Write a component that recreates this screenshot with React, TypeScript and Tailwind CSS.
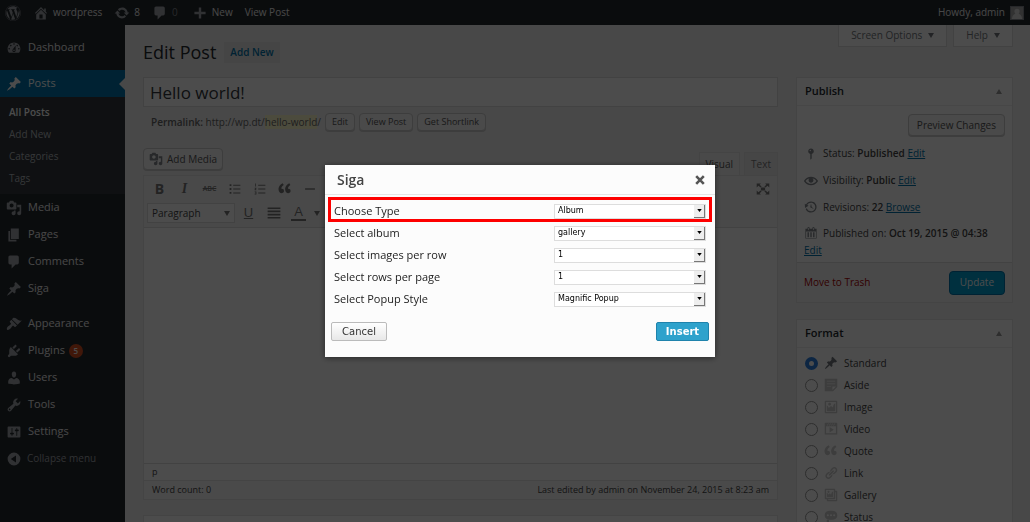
import { useState } from 'react'
import type { ReactNode } from 'react'
import { FaWordpress } from 'react-icons/fa'

const ICONS = {
  pin: 'M10.44 3.02l1.82-1.82 6.36 6.35-1.83 1.82c-1.05-.68-2.48-.57-3.41.36l-.75.75c-.92.93-1.04 2.35-.35 3.41l-1.83 1.82-2.41-2.41-2.8 2.79c-.42.42-3.38 2.71-3.8 2.29s1.86-3.39 2.28-3.81l2.79-2.79L4.1 9.36l1.83-1.82c1.05.69 2.48.57 3.4-.36l.75-.75c.93-.92 1.05-2.35.36-3.41z',
  comments: 'M5 2h9c1.1 0 2 .9 2 2v7c0 1.1-.9 2-2 2h-2l-5 5v-5H5c-1.1 0-2-.9-2-2V4c0-1.1.9-2 2-2z',
  pages: 'M6 15V2h10v13H6zm-1 1h8v2H3V5h2v11z',
  media: 'M13 11V4c0-.55-.45-1-1-1h-1.67L9 1H5L3.67 3H2c-.55 0-1 .45-1 1v7c0 .55.45 1 1 1h10c.55 0 1-.45 1-1zM7 4.5c1.38 0 2.5 1.12 2.5 2.5S8.38 9.5 7 9.5 4.5 8.38 4.5 7 5.62 4.5 7 4.5zM14 6h5v10.5c0 1.38-1.12 2.5-2.5 2.5S14 17.88 14 16.5s1.12-2.5 2.5-2.5c.17 0 .34.02.5.05V9h-3V6zm-4 8.05V13h2v3.5c0 1.38-1.12 2.5-2.5 2.5S7 17.88 7 16.5 8.12 14 9.5 14c.17 0 .34.02.5.05z',
  appearance: 'M14.48 11.06L7.41 3.99l1.5-1.5c.5-.56 2.3-.47 3.51.32 1.21.8 1.43 1.28 2.91 2.1 1.18.64 2.45 1.26 4.45.85zm-.71.71L6.7 4.7 4.93 6.47c-.39.39-.39 1.02 0 1.41l1.06 1.06c.39.39.39 1.03 0 1.42-.6.6-1.43 1.11-2.21 1.69-.35.26-.7.53-1.01.84C1.43 14.23.4 16.08 1.4 17.07c.99 1 2.84-.03 4.18-1.36.31-.31.58-.66.85-1.02.57-.78 1.08-1.61 1.69-2.21.39-.39 1.02-.39 1.41 0l1.06 1.06c.39.39 1.02.39 1.41 0z',
  plugins: 'M13.11 4.36L9.87 7.6 8 5.73l3.24-3.24c.35-.34 1.05-.2 1.56.32.52.51.66 1.21.31 1.55zm-8 1.77l.91-1.12 9.01 9.01-1.19.84c-.71.71-2.63 1.16-3.82 1.16H6.14L4.9 17.26c-.59.59-1.54.59-2.12 0-.59-.58-.59-1.53 0-2.12l1.24-1.24v-3.88c0-1.13.4-3.19 1.09-3.89zm7.26 3.97l3.24-3.24c.34-.35 1.04-.21 1.55.31.52.51.66 1.21.31 1.55l-3.24 3.25z',
  users: 'M10 9.25c-2.27 0-2.73-3.44-2.73-3.44C7 4.02 7.82 2 9.97 2c2.16 0 2.98 2.02 2.71 3.81 0 0-.41 3.44-2.68 3.44zm0 2.57L12.72 10c2.39 0 4.52 2.33 4.52 4.53v2.49s-3.65 1.13-7.24 1.13c-3.65 0-7.24-1.13-7.24-1.13v-2.49c0-2.25 1.94-4.48 4.47-4.48z',
  tools: 'M16.68 9.77c-1.34 1.34-3.3 1.67-4.95.99l-5.41 6.52c-.99.99-2.59.99-3.58 0s-.99-2.59 0-3.57l6.52-5.42c-.68-1.65-.35-3.61.99-4.95 1.28-1.28 3.12-1.62 4.72-1.06l-2.89 2.89 2.82 2.82 2.86-2.87c.53 1.58.18 3.39-1.08 4.65zM3.81 16.21c.4.39 1.04.39 1.43 0 .4-.4.4-1.04 0-1.43-.39-.4-1.03-.4-1.43 0-.39.39-.39 1.03 0 1.43z',
  settings: 'M18 16V4c0-.55-.45-1-1-1H3c-.55 0-1 .45-1 1v12c0 .55.45 1 1 1h14c.55 0 1-.45 1-1zM8 11h1c.55 0 1 .45 1 1s-.45 1-1 1H8v1.5c0 .28-.22.5-.5.5s-.5-.22-.5-.5V13H6c-.55 0-1-.45-1-1s.45-1 1-1h1V5.5c0-.28.22-.5.5-.5s.5.22.5.5V11zm5-2h-1c-.55 0-1-.45-1-1s.45-1 1-1h1V5.5c0-.28.22-.5.5-.5s.5.22.5.5V7h1c.55 0 1 .45 1 1s-.45 1-1 1h-1v5.5c0 .28-.22.5-.5.5s-.5-.22-.5-.5V9z',
  collapse: 'M10 2a8 8 0 1 0 0 16 8 8 0 0 0 0-16zM12.500 5.500v9L6 10z',
  dashboard: 'M3.76 16h12.48c1.1-1.37 1.76-3.11 1.76-5 0-4.42-3.58-8-8-8s-8 3.58-8 8c0 1.89.66 3.63 1.76 5zM10 4c.55 0 1 .45 1 1s-.45 1-1 1-1-.45-1-1 .45-1 1-1zM6 6c.55 0 1 .45 1 1s-.45 1-1 1-1-.45-1-1 .45-1 1-1zm8 0c.55 0 1 .45 1 1s-.45 1-1 1-1-.45-1-1 .45-1 1-1zm-5.37 5.55L12 7v6c0 1.1-.9 2-2 2s-2-.9-2-2c0-.57.24-1.08.63-1.45zM4 10c.55 0 1 .45 1 1s-.45 1-1 1-1-.45-1-1 .45-1 1-1zm12 0c.55 0 1 .45 1 1s-.45 1-1 1-1-.45-1-1 .45-1 1-1zm-5 3c0-.55-.45-1-1-1s-1 .45-1 1 .45 1 1 1 1-.45 1-1z',
  home: 'M16 8.5l1.53 1.53-1.06 1.06L10 4.6l-6.47 6.49-1.06-1.06L10 2.5l4 4v-2h2v4zm-6-2.46l6 5.99V18H4v-5.97zM12 17v-5H8v5h4z',
  update: 'M10.2 3.28c3.53 0 6.43 2.61 6.92 6h2.08l-3.5 4-3.5-4h2.32c-.45-1.97-2.21-3.45-4.32-3.45-1.45 0-2.73.71-3.54 1.78L4.95 5.66C6.23 4.2 8.11 3.28 10.2 3.28zm-.4 13.44c-3.52 0-6.43-2.61-6.92-6H.8l3.5-4c1.17 1.33 2.33 2.67 3.5 4H5.48c.45 1.97 2.21 3.45 4.32 3.45 1.45 0 2.73-.71 3.54-1.78l1.71 1.95c-1.28 1.46-3.15 2.38-5.25 2.38z',
  plus: 'M17 8.500v3h-5.500V17h-3v-5.500H3v-3h5.500V3h3v5.500z',
  status: 'M14 6c0 1.86-1.28 3.41-3 3.86V16c0 1-2 2-2 2V9.86c-1.72-.45-3-2-3-3.86 0-2.21 1.79-4 4-4s4 1.79 4 4zM8 5c0 .55.45 1 1 1s1-.45 1-1-.45-1-1-1-1 .45-1 1z',
  eye: 'M19.700 9.400C17.700 6 14 3.900 10 3.900S2.300 6 .3 9.400L0 10l.3.6c2 3.400 5.700 5.500 9.700 5.500s7.700-2.100 9.700-5.500l.3-.6-.3-.6zM10 14.100c-3.100 0-6-1.600-7.700-4.100C3.600 8 5.700 6.600 8 6.100c-.9.6-1.500 1.700-1.500 2.900 0 1.900 1.600 3.500 3.500 3.500s3.500-1.600 3.500-3.500c0-1.200-.6-2.300-1.500-2.900 2.300.5 4.400 1.900 5.700 3.900-1.700 2.500-4.600 4.100-7.700 4.100z',
  backup: 'M13.65 2.88c3.93 2.01 5.48 6.84 3.47 10.77s-6.83 5.48-10.77 3.47c-1.87-.96-3.2-2.56-3.86-4.4l1.64-1.03c.45 1.57 1.52 2.95 3.08 3.76 3.01 1.54 6.69.35 8.23-2.66 1.55-3.01.36-6.69-2.65-8.24C9.78 3.01 6.1 4.2 4.56 7.21l1.88.97-4.95 3.08-.39-5.82 1.78.91C4.9 2.4 9.75.89 13.65 2.88zm-4.36 7.83C9.11 10.53 9 10.28 9 10c0-.07.03-.12.04-.19h-.01L10 5l.97 4.81L14 13l-4.500-2.120.02-.02c-.08-.04-.16-.09-.23-.15z',
  calendar: 'M15 4h3v14H2V4h3V3c0-.83.67-1.500 1.500-1.500S8 2.170 8 3v1h4V3c0-.83.67-1.500 1.500-1.500S15 2.170 15 3v1zM6 3v2.500c0 .28.22.5.5.5s.5-.22.5-.5V3c0-.28-.22-.5-.5-.5S6 2.720 6 3zm7 0v2.500c0 .28.22.5.5.5s.5-.22.5-.5V3c0-.28-.22-.5-.5-.5s-.5.22-.5.5zm4 14V8H3v9h14zM7 16V9H5v7h2zm4 0V9H9v7h2zm4 0V9h-2v7h2z',
  aside: 'M1 1h18v12l-6 6H1V1zm3 3v1h12V4H4zm0 4v1h12V8H4zm6 5v-1H4v1h6zm2 4l5-5h-5v5z',
  image: 'M2.25 1h15.5c.69 0 1.25.56 1.25 1.25v15.5c0 .69-.56 1.25-1.25 1.25H2.25C1.56 19 1 18.44 1 17.75V2.25C1 1.56 1.56 1 2.25 1zM17 17V3H3v14h14zM10 6c0-1.1-.9-2-2-2s-2 .9-2 2 .9 2 2 2 2-.9 2-2zm3 5s0-6 3-6v10c0 .55-.45 1-1 1H5c-.55 0-1-.45-1-1V8c2 0 3 4 3 4s1-3 3-3 3 2 3 2z',
  video: 'M2 1h16c.55 0 1 .45 1 1v16l-18-.02V2c0-.55.45-1 1-1zm4 1L4 5h1l2-3H6zm4 0H9L7 5h1zm3 0h-1l-2 3h1zm3 0h-1l-2 3h1zm1 14V6H3v10h14zM8 7l6 4-6 4V7z',
  quote: 'M8.54 12.74c0-.87-.24-1.61-.72-2.22-.73-.92-2.14-1.03-2.96-.85-.34-1.93 1.3-4.39 3.42-5.45L6.65 1.94C3.45 3.46.31 6.96.85 11.37 1.19 14.16 2.8 16 5.08 16c1 0 1.83-.29 2.48-.88.66-.59.98-1.38.98-2.38zm9.43 0c0-.87-.24-1.61-.72-2.22-.73-.92-2.14-1.03-2.96-.85-.34-1.93 1.3-4.39 3.42-5.45l-1.63-2.28c-3.2 1.52-6.34 5.02-5.8 9.43.34 2.79 1.95 4.63 4.23 4.63 1 0 1.83-.29 2.48-.88.66-.59.98-1.38.98-2.38z',
  link: 'M17.74 2.76c1.68 1.69 1.68 4.41 0 6.1l-1.53 1.52c-1.12 1.12-2.7 1.47-4.14 1.09l2.62-2.61.76-.77.76-.76c.84-.84.84-2.2 0-3.04-.84-.85-2.2-.85-3.04 0l-.77.76-3.38 3.38c-.37-1.44-.02-3.02 1.1-4.14l1.52-1.53c1.69-1.68 4.42-1.68 6.1 0zM8.59 13.43l5.34-5.34c.42-.42.42-1.1 0-1.52-.44-.43-1.13-.39-1.53 0l-5.33 5.34c-.42.42-.42 1.1 0 1.52.44.43 1.13.39 1.52 0zm-.76 2.29l4.14-4.15c.38 1.44.03 3.02-1.09 4.14l-1.52 1.53c-1.69 1.68-4.41 1.68-6.1 0-1.68-1.68-1.68-4.42 0-6.1l1.53-1.52c1.12-1.12 2.7-1.47 4.14-1.1l-4.14 4.15c-.85.84-.85 2.2 0 3.05.84.84 2.2.84 3.04 0z',
  gallery: 'M16 4h1.96c.57 0 1.04.47 1.04 1.04v12.92c0 .57-.47 1.04-1.04 1.04H5.04C4.47 19 4 18.53 4 17.96V16H2.04C1.47 16 1 15.53 1 14.96V2.04C1 1.47 1.47 1 2.04 1h12.92c.57 0 1.04.47 1.04 1.04V4zM3 14h11V3H3v11zm5-8.5C8 4.67 7.33 4 6.5 4S5 4.67 5 5.5 5.67 7 6.5 7 8 6.33 8 5.5zm2 4.5s1-5 3-5v8H4V7c2 0 2 3 2 3s.33-2 2-2 2 2 2 2zm7 7V6h-1v8.96c0 .57-.47 1.04-1.04 1.04H6v1h11z',
  chat: 'M10 1c7 0 9 2.910 9 6.500S17 14 10 14s-9-2.910-9-6.500S3 1 10 1zM5.500 9a1.500 1.500 0 1 0 0-3 1.500 1.500 0 0 0 0 3zM10 9a1.500 1.500 0 1 0 0-3 1.500 1.500 0 0 0 0 3zM14.500 9a1.500 1.500 0 1 0 0-3 1.500 1.500 0 0 0 0 3zM5.500 14a1.800 1.800 0 1 1 0 3.600 1.800 1.800 0 0 1 0-3.600zM2 17a1 1 0 1 1 0 2 1 1 0 0 1 0-2z',
  ul: 'M1 2h3v3H1zM7 3h12v1.500H7zM1 8.500h3v3H1zM7 9.300h12v1.500H7zM1 15h3v3H1zM7 15.800h12v1.500H7z',
  ol: 'M2 1h1.300v5H2zM7 3h12v1.500H7zM1 8h3v1.200L2.500 11H4v1H1v-1l1.500-2H1zM7 9.300h12v1.500H7zM1 14h3v5H1v-1h2v-1H1.500v-1H3v-1H1zM7 15.800h12v1.500H7z',
  hr: 'M3 9h14v2H3z',
  justify: 'M2 3h16v2H2zM2 7h16v2H2zM2 11h16v2H2zM2 15h16v2H2z',
  fullscreen: 'M1 2h6L5.200 3.800 8 6.500 6.500 8 3.500 5.300 1 8zM19 2v6l-2.500-2.700L13.500 8 12 6.500l2.800-2.700L13 2zM1 18v-6l2.500 2.700L6.500 12 8 13.500l-2.800 2.700L7 18zM19 18h-6l1.800-1.800L12 13.500l1.500-1.500 3 2.700L19 12zM7 8h6v4H7z',
}

type IconName = keyof typeof ICONS

function Icon({ name, className = 'size-4' }: { name: IconName; className?: string }) {
  return (
    <svg viewBox="0 0 20 20" fill="currentColor" fillRule="evenodd" aria-hidden="true" className={`shrink-0 ${className}`}>
      <path d={ICONS[name]} />
    </svg>
  )
}

function Caret({ up = false, className = '' }: { up?: boolean; className?: string }) {
  return (
    <svg viewBox="0 0 6 5" fill="currentColor" aria-hidden="true" className={`h-[5px] w-[6px] shrink-0 ${className}`}>
      <path d={up ? 'M3 0l3 5H0z' : 'M0 0h6L3 5z'} />
    </svg>
  )
}

const menuTop: [IconName, string][] = [
  ['media', 'Media'],
  ['pages', 'Pages'],
  ['comments', 'Comments'],
  ['pin', 'Siga'],
]

const menuBottom: [IconName, string][] = [
  ['appearance', 'Appearance'],
  ['plugins', 'Plugins'],
  ['users', 'Users'],
  ['tools', 'Tools'],
  ['settings', 'Settings'],
]

const formats: [IconName, string][] = [
  ['pin', 'Standard'],
  ['aside', 'Aside'],
  ['image', 'Image'],
  ['video', 'Video'],
  ['quote', 'Quote'],
  ['link', 'Link'],
  ['gallery', 'Gallery'],
  ['chat', 'Status'],
]

const fields = [
  { id: 'type', label: 'Choose Type', options: ['Album', 'Gallery'] },
  { id: 'album', label: 'Select album', options: ['gallery'] },
  { id: 'images', label: 'Select images per row', options: ['1', '2', '3', '4'] },
  { id: 'rows', label: 'Select rows per page', options: ['1', '2', '3', '4'] },
  { id: 'popup', label: 'Select Popup Style', options: ['Magnific Popup'] },
]

function AdminBar() {
  return (
    <header className="flex h-[25px] shrink-0 items-center bg-[#23282d] pr-1.5 pl-[5px] text-[10px] text-[#eee]">
      <a href="#" aria-label="About WordPress" className="text-[#a0a5aa]">
        <FaWordpress className="size-4" />
      </a>
      <a href="#" className="ml-3 flex items-center gap-1">
        <Icon name="home" className="size-4 text-[#a0a5aa]" />
        wordpress
      </a>
      <a href="#" className="ml-3 flex items-center gap-1">
        <Icon name="update" className="size-4 text-[#a0a5aa]" />
        8
      </a>
      <a href="#" className="ml-3 flex items-center gap-1 text-[#82878c]">
        <Icon name="comments" className="size-4 text-[#a0a5aa]" />
        0
      </a>
      <a href="#" className="ml-3.5 flex items-center gap-1">
        <Icon name="plus" className="size-4 text-[#a0a5aa]" />
        New
      </a>
      <a href="#" className="ml-3">View Post</a>
      <a href="#" className="ml-auto flex items-center gap-[5px]">
        Howdy, admin
        <svg viewBox="0 0 14 14" aria-hidden="true" className="size-3.5 border border-[#82878c] bg-[#a8a8a8]">
          <path fill="#dedede" d="M7 2a3 3 0 0 1 3 3c0 1.500-.7 2.500-1.300 3 2 .8 3.800 2 4.300 6H1c.5-4 2.300-5.200 4.300-6C4.700 7.500 4 6.500 4 5a3 3 0 0 1 3-3z" />
        </svg>
      </a>
    </header>
  )
}

function MenuItem({ icon, children }: { icon: IconName; children: ReactNode }) {
  return (
    <a href="#" className="flex h-[27px] items-center gap-1.5 pl-1.5 text-[11px] text-[#eee]">
      <Icon name={icon} className="size-4 text-[#a0a5aa]" />
      {children}
    </a>
  )
}

function Sidebar() {
  return (
    <nav className="w-[125px] shrink-0 bg-[#23282d] pt-[9px]">
      <MenuItem icon="dashboard">Dashboard</MenuItem>
      <a href="#" className="mt-[9px] flex h-[27px] items-center gap-1.5 bg-[#0073aa] pl-1.5 text-[11px] text-white">
        <Icon name="pin" />
        Posts
        <svg viewBox="0 0 6 12" aria-hidden="true" className="ml-auto h-3 w-1.5">
          <path fill="#f1f1f1" d="M6 0v12L0 6z" />
        </svg>
      </a>
      <div className="flex flex-col bg-[#32373c] pt-1 pb-[5px] pl-[9px] text-[10px] leading-[22px] text-[#b4b9be]">
        <a href="#" className="font-semibold text-white">All Posts</a>
        <a href="#">Add New</a>
        <a href="#">Categories</a>
        <a href="#">Tags</a>
      </div>
      {menuTop.map(([icon, label]) => (
        <MenuItem key={label} icon={icon}>{label}</MenuItem>
      ))}
      <div className="mt-2">
        {menuBottom.map(([icon, label]) => (
          <MenuItem key={label} icon={icon}>
            {label}
            {label === 'Plugins' && (
              <span className="-ml-0.5 flex size-3.5 items-center justify-center rounded-full bg-[#d54e21] text-[8px] font-semibold text-white">5</span>
            )}
          </MenuItem>
        ))}
        <button className="flex h-[27px] items-center gap-[5px] pl-1.5 text-[10px] text-[#a0a5aa]">
          <Icon name="collapse" />
          Collapse menu
        </button>
      </div>
    </nav>
  )
}

function SmallButton({ children }: { children: ReactNode }) {
  return (
    <button className="h-[18px] rounded-sm border border-[#ccc] bg-[#f7f7f7] px-1.5 text-[9px] text-[#555] shadow-[0_1px_0_#ccc]">
      {children}
    </button>
  )
}

function ToolButton({ label, children }: { label: string; children: ReactNode }) {
  return (
    <button aria-label={label} className="flex h-6 w-[25px] items-center justify-center">
      {children}
    </button>
  )
}

function Editor() {
  return (
    <>
      <div className="mt-[17px] flex items-end justify-between">
        <button className="mb-[5px] flex h-[22px] items-center gap-1 rounded-sm border border-[#ccc] bg-[#f7f7f7] px-[5px] text-[10px] text-[#555] shadow-[0_1px_0_#ccc]">
          <Icon name="media" className="size-3.5 text-[#82878c]" />
          Add Media
        </button>
        <div className="flex items-end gap-1 text-[10px]">
          <button className="h-[23px] border border-b-0 border-[#e5e5e5] bg-[#f5f5f5] px-1.5 text-[#555]">Visual</button>
          <button className="h-[23px] border border-b-0 border-[#e5e5e5] bg-[#ebebeb] px-1.5 text-[#777]">Text</button>
        </div>
      </div>
      <div className="border border-[#e5e5e5] bg-white">
        <div className="border-b border-[#ddd] bg-[#f5f5f5] px-[3px] pt-px pb-0.5 text-[#777]">
          <div className="flex items-center">
            <ToolButton label="Bold"><span className="text-sm font-bold">B</span></ToolButton>
            <ToolButton label="Italic"><span className="font-['Liberation_Serif',serif] text-sm font-bold italic">I</span></ToolButton>
            <ToolButton label="Strikethrough"><span className="text-[7px] font-semibold line-through">ABC</span></ToolButton>
            <ToolButton label="Bulleted list"><Icon name="ul" className="size-3" /></ToolButton>
            <ToolButton label="Numbered list"><Icon name="ol" className="size-3" /></ToolButton>
            <ToolButton label="Blockquote"><Icon name="quote" className="size-3.5" /></ToolButton>
            <ToolButton label="Horizontal line"><Icon name="hr" className="size-3.5" /></ToolButton>
            <button aria-label="Distraction-free writing" className="mr-1 ml-auto">
              <Icon name="fullscreen" className="size-3.5" />
            </button>
          </div>
          <div className="flex items-center">
            <button className="mr-px flex h-5 w-[88px] items-center justify-between border border-[#ddd] bg-white px-1 text-[10px] text-[#444]">
              Paragraph
              <Caret className="text-[#777]" />
            </button>
            <ToolButton label="Underline"><span className="font-['Liberation_Sans',sans-serif] text-[13px] underline">U</span></ToolButton>
            <ToolButton label="Justify"><Icon name="justify" className="size-4" /></ToolButton>
            <button aria-label="Text color" className="flex h-6 items-center gap-2 pl-[5px]">
              <span className="w-[15px] border-b-2 border-[#777] text-center font-['Liberation_Sans',sans-serif] text-[13px] leading-[14px]">A</span>
              <Caret />
            </button>
          </div>
        </div>
        <div contentEditable suppressContentEditableWarning aria-label="Post content" className="h-[235px] outline-none" />
        <div className="h-[17px] border-t border-[#ddd] px-2 text-[9px] leading-4 text-[#444]">p</div>
        <div className="flex h-[19px] items-center justify-between border-t border-[#e5e5e5] bg-[#f7f7f7] px-2 text-[9px] text-[#444]">
          <span>Word count: 0</span>
          <span>Last edited by admin on November 24, 2015 at 8:23 am</span>
        </div>
      </div>
      <div className="mt-[15px] h-10 border border-[#e5e5e5] bg-white" />
    </>
  )
}

function Panel({ title, children }: { title: string; children: ReactNode }) {
  return (
    <section className="border border-[#e5e5e5] bg-white">
      <h2 className="flex h-7 items-center justify-between border-b border-[#eee] pr-2.5 pl-2 text-[11px] font-semibold text-[#23282d]">
        {title}
        <Caret up className="text-[#999]" />
      </h2>
      {children}
    </section>
  )
}

function EditLink({ children }: { children: string }) {
  return <a href="#" className="text-[#0073aa] underline">{children}</a>
}

function PublishPanel() {
  return (
    <Panel title="Publish">
      <div className="px-[7px] pt-2 pb-1 text-[10px] text-[#444]">
        <button className="ml-auto block h-[22px] rounded-sm border border-[#ccc] bg-[#f7f7f7] px-2 text-[#555] shadow-[0_1px_0_#ccc]">
          Preview Changes
        </button>
        <p className="mt-1 flex h-[27px] items-center gap-[5px]">
          <Icon name="status" className="size-3.5 text-[#82878c]" />
          <span>Status: <b className="font-semibold">Published</b> <EditLink>Edit</EditLink></span>
        </p>
        <p className="flex h-[27px] items-center gap-[5px]">
          <Icon name="eye" className="size-3.5 text-[#82878c]" />
          <span>Visibility: <b className="font-semibold">Public</b> <EditLink>Edit</EditLink></span>
        </p>
        <p className="flex h-[26px] items-center gap-[5px]">
          <Icon name="backup" className="size-3.5 text-[#82878c]" />
          <span>Revisions: <b className="font-semibold">22</b> <EditLink>Browse</EditLink></span>
        </p>
        <p className="flex h-[26px] items-center gap-[5px]">
          <Icon name="calendar" className="size-3.5 text-[#82878c]" />
          <span>Published on: <b className="font-semibold">Oct 19, 2015 @ 04:38</b></span>
        </p>
        <p className="-mt-1 leading-4"><EditLink>Edit</EditLink></p>
      </div>
      <div className="flex h-10 items-center justify-between border-t border-[#ddd] bg-[#f5f5f5] px-[7px] text-[10px]">
        <a href="#" className="text-[#a00]">Move to Trash</a>
        <button className="h-6 rounded-sm border border-[#0073aa] bg-[#00a0d2] px-2.5 text-white">Update</button>
      </div>
    </Panel>
  )
}

function FormatPanel() {
  const [format, setFormat] = useState('Standard')

  return (
    <Panel title="Format">
      <div className="px-2 pt-1 text-[10px] text-[#444]">
        {formats.map(([icon, label]) => (
          <label key={label} className="flex h-[22px] items-center">
            <input
              type="radio"
              name="format"
              checked={format === label}
              onChange={() => setFormat(label)}
              className="size-[13px] appearance-none rounded-full border border-[#999] bg-white checked:border-4 checked:border-[#2d80e0]"
            />
            <Icon name={icon} className={label === 'Standard' ? 'ml-1.5 size-3.5 text-[#72777c]' : 'ml-1.5 size-3.5 text-[#ccc]'} />
            <span className="ml-1.5">{label}</span>
          </label>
        ))}
      </div>
    </Panel>
  )
}

function SigaDialog() {
  return (
    <div role="dialog" aria-label="Siga" className="w-[390px] bg-[#fcfcfc] pb-4 shadow-[0_1px_6px_rgba(0,0,0,0.5)]">
      <div className="flex h-[30px] items-center justify-between border-b border-[#e5e5e5] pr-2.5 pl-3">
        <h2 className="text-sm font-semibold text-[#444]">Siga</h2>
        <button aria-label="Close" className="text-[#555]">
          <svg viewBox="0 0 10 10" stroke="currentColor" strokeWidth="2.600" aria-hidden="true" className="size-2.5">
            <path d="M1.200 1.200l7.600 7.600M8.800 1.200L1.200 8.800" />
          </svg>
        </button>
      </div>
      <form className="relative pt-[5px]" onSubmit={e => e.preventDefault()}>
        {fields.map(field => (
          <div key={field.id} className="flex h-[22px] items-center justify-between px-[9px]">
            <label htmlFor={field.id} className="text-[11px] text-[#222]">{field.label}</label>
            <div className="relative h-[15px] w-[152px]">
              <select
                id={field.id}
                className="block size-full appearance-none border border-[#ddd] bg-white pl-[3px] font-['DejaVu_Sans',sans-serif] text-[8px] text-black"
              >
                {field.options.map(option => (
                  <option key={option}>{option}</option>
                ))}
              </select>
              <span className="pointer-events-none absolute top-px right-px flex h-[13px] w-[11px] items-center justify-center border-r border-b border-[#777] bg-[#eee]">
                <svg viewBox="0 0 6 4" aria-hidden="true" className="h-[3px] w-[5px]">
                  <path d="M0 0h6L3 4z" />
                </svg>
              </span>
            </div>
          </div>
        ))}
        {/* highlight around the type row */}
        <div className="pointer-events-none absolute inset-x-[3px] top-0.5 h-[25px] border-3 border-[#fe0000]" />
        <div className="mt-3 flex justify-between px-1.5 font-['DejaVu_Sans',sans-serif] text-[10px]">
          <button type="button" className="h-[19px] w-14 rounded-xs border border-[#bbb] bg-linear-to-b from-white to-[#e8e8e8] text-[#333]">
            Cancel
          </button>
          <button type="submit" className="h-[19px] w-[53px] rounded-xs border border-[#1f83ac] bg-[#2ea2cc] font-bold text-white">
            Insert
          </button>
        </div>
      </form>
    </div>
  )
}

export default function App() {
  const [title, setTitle] = useState('Hello world!')

  return (
    <div className="flex h-screen flex-col overflow-hidden bg-[#f1f1f1] font-['Open_Sans',sans-serif]">
      <AdminBar />
      <div className="flex min-h-0 flex-1">
        <Sidebar />
        <main className="min-w-0 flex-1 pr-[17px] pl-[18px]">
          <div className="flex h-[52px] items-start justify-between">
            <div className="flex items-center gap-2 pt-4">
              <h1 className="text-lg leading-[22px] text-[#23282d]">Edit Post</h1>
              <a href="#" className="bg-[#e8e8e8] px-1.5 text-[10px] leading-[21px] font-semibold text-[#0073aa]">Add New</a>
            </div>
            <div className="flex gap-1.5 text-[10px] text-[#72777c]">
              <button className="flex h-[22px] items-center gap-1.5 border border-t-0 border-[#ddd] bg-white px-3">
                Screen Options
                <Caret />
              </button>
              <button className="flex h-[22px] items-center gap-1.5 border border-t-0 border-[#ddd] bg-white px-3">
                Help
                <Caret />
              </button>
            </div>
          </div>
          <div className="flex items-start gap-[18px]">
            <div className="min-w-0 flex-1">
              <input
                aria-label="Post title"
                value={title}
                onChange={e => setTitle(e.target.value)}
                className="block h-[30px] w-full border border-[#ddd] bg-white px-1.5 text-[17px] text-[#32373c] outline-none"
              />
              <div className="mt-1.5 flex h-[18px] items-center gap-1 pl-2 text-[10px] text-[#666]">
                <span>
                  <b className="font-semibold">Permalink:</b> http://wp.dt/<span className="bg-[#fffbcc]">hello-world</span>/
                </span>
                <SmallButton>Edit</SmallButton>
                <SmallButton>View Post</SmallButton>
                <SmallButton>Get Shortlink</SmallButton>
              </div>
              <Editor />
            </div>
            <aside className="flex w-[217px] shrink-0 flex-col gap-4">
              <PublishPanel />
              <FormatPanel />
            </aside>
          </div>
        </main>
      </div>
      <div className="fixed inset-0 flex items-center justify-center bg-black/70 pl-2.5">
        <SigaDialog />
      </div>
    </div>
  )
}
